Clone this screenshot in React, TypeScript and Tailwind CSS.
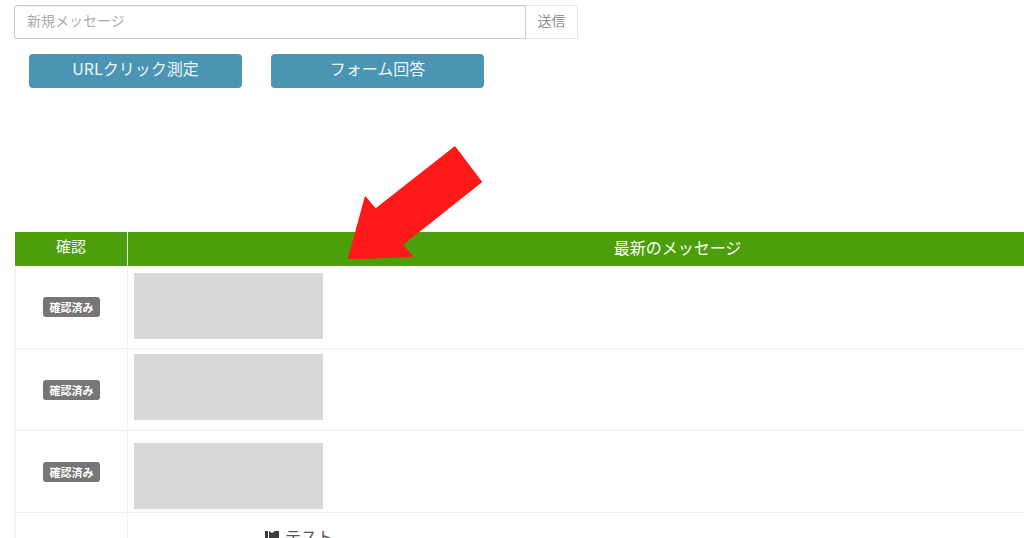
const font = { fontFamily: '"Noto Sans CJK JP", "Noto Sans", sans-serif' }

const rows = [
  { pad: "pt-[7px]", h: "h-[83px]" },
  { pad: "pt-[5px]", h: "h-[82px]" },
  { pad: "pt-[12px]", h: "h-[82px]" },
]

function Arrow() {
  return (
    <svg className="absolute left-0 top-0 pointer-events-none" width="1024" height="538">
      <polygon
        fill="#ff1a1a"
        points="347.7,259.3 365,195.7 375.7,208.3 455,146 482.3,182 403.3,244.7 413.7,257.3"
      />
    </svg>
  )
}

export default function App() {
  return (
    <div className="relative h-[538px] w-[1024px] overflow-hidden bg-white" style={font}>
      <div className="ml-[14px] flex h-[39px] w-[564px] pt-[5px]">
        <div className="flex flex-1 items-center rounded-l-[3px] border border-[#ccc] bg-white pb-[3px] pl-3 text-[14px] text-[#ababab] shadow-[inset_0_1px_1px_rgba(0,0,0,0.08)]">
          新規メッセージ
        </div>
        <button className="w-[52px] rounded-r-[3px] border border-l-0 border-[#e6e6e6] bg-white pb-[3px] text-[14px] text-[#8f8f8f]">
          送信
        </button>
      </div>

      <div className="ml-[29px] mt-[15px] flex gap-[29px]">
        <button className="h-[34px] w-[213px] rounded-[4px] bg-[#4a95b3] pb-[7px] text-[16px] text-[#eef6f9]">
          URLクリック測定
        </button>
        <button className="h-[34px] w-[213px] rounded-[4px] bg-[#4a95b3] pb-[7px] text-[16px] text-[#eef6f9]">
          フォーム回答
        </button>
      </div>

      <div className="ml-[15px] mt-[144px]">
        <div className="flex h-[34px] bg-[#4c9f0a] pb-[5px] text-white">
          <div className="-mb-[5px] flex w-[113px] items-center justify-center border-r border-[#e8f2e0] pb-[5px] text-[15px]">確認</div>
          <div className="flex flex-1 items-center justify-center pl-[203px] text-[16px]">最新のメッセージ</div>
        </div>

        <div className="-ml-px border-l-2 border-[#f2f2f2]">
          {rows.map((row, i) => (
            <div key={i} className={`flex ${row.h} border-b border-[#eeeeee]`}>
              <div className="flex w-[112px] items-center justify-center border-r border-[#f2f2f2]">
                <span className="rounded-[3px] bg-[#767676] px-[6.5px] text-[11px] leading-[20px] font-bold text-white">
                  確認済み
                </span>
              </div>
              <div className={`flex-1 pl-[6px] ${row.pad}`}>
                <div className="h-[66px] w-[189px] bg-[#d8d8d8]" />
              </div>
            </div>
          ))}
          <div className="flex h-[40px]">
            <div className="w-[112px] border-r border-[#f2f2f2]" />
            <div className="flex flex-1 items-start pl-[137px] pt-[13px] text-[16px] leading-[20px] text-[#555]">
              <svg className="mt-[4px] mr-[5px]" width="15" height="16" viewBox="0 0 15 16">
                <path fill="#3d3d3d" d="M0 1h3v15H0z" />
                <path fill="#3d3d3d" d="M4 1l3 2 3-2 4 0v13H4z" />
              </svg>
              テスト
            </div>
          </div>
        </div>
      </div>

      <Arrow />
    </div>
  )
}
